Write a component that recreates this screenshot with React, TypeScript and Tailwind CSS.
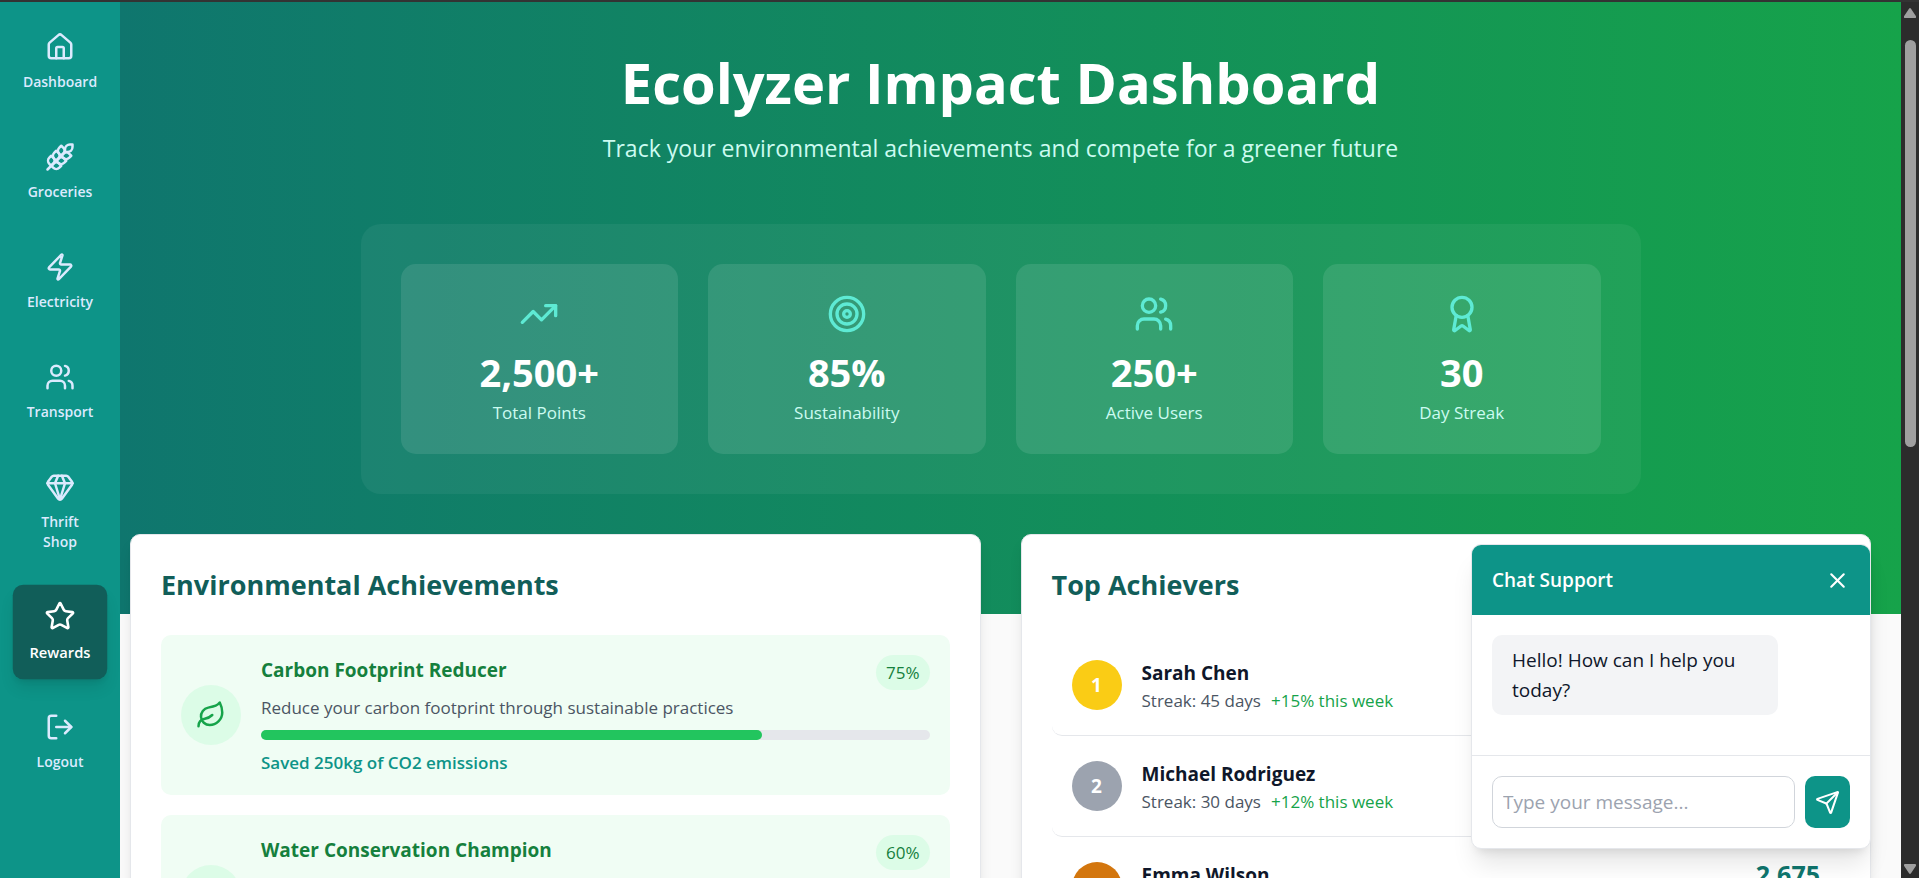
import { useState } from "react";
import {
  Award,
  Droplets,
  Gem,
  House,
  Leaf,
  LogOut,
  Send,
  Star,
  Target,
  TrendingUp,
  Users,
  Wheat,
  X,
  Zap,
  type LucideIcon,
} from "lucide-react";
import clsx from "clsx";

const navItems: { label: string; icon: LucideIcon; active?: boolean }[] = [
  { label: "Dashboard", icon: House },
  { label: "Groceries", icon: Wheat },
  { label: "Electricity", icon: Zap },
  { label: "Transport", icon: Users },
  { label: "Thrift Shop", icon: Gem },
  { label: "Rewards", icon: Star, active: true },
  { label: "Logout", icon: LogOut },
];

const stats: { value: string; label: string; icon: LucideIcon }[] = [
  { value: "2,500+", label: "Total Points", icon: TrendingUp },
  { value: "85%", label: "Sustainability", icon: Target },
  { value: "250+", label: "Active Users", icon: Users },
  { value: "30", label: "Day Streak", icon: Award },
];

const achievements = [
  {
    title: "Carbon Footprint Reducer",
    description: "Reduce your carbon footprint through sustainable practices",
    progress: 75,
    impact: "Saved 250kg of CO2 emissions",
    icon: Leaf,
  },
  {
    title: "Water Conservation Champion",
    description: "Implement water-saving techniques in daily life",
    progress: 60,
    impact: "Conserved 1000L of water",
    icon: Droplets,
  },
];

const achievers = [
  { name: "Sarah Chen", points: "2,850", streak: 45, change: "+15%", color: "bg-[#facc15]" },
  { name: "Michael Rodriguez", points: "2,720", streak: 30, change: "+12%", color: "bg-[#9ca3af]" },
  { name: "Emma Wilson", points: "2,675", streak: 28, change: "+10%", color: "bg-[#d3760e]" },
];

function Sidebar() {
  return (
    <nav className="w-[120px] shrink-0 bg-[#0d9488] pt-[15px] flex flex-col items-center gap-5">
      {navItems.map(({ label, icon: Icon, active }) => (
        <a
          key={label}
          href="#"
          className={clsx(
            "w-[90px] px-[10px] py-[15px] flex flex-col items-center gap-[10px] rounded-[10px] text-[14px] leading-5 font-semibold",
            active ? "bg-[#115e59] text-white shadow-lg scale-105" : "text-[#dbeafe]"
          )}
        >
          <Icon size={30} />
          <span className="text-center">{label}</span>
        </a>
      ))}
    </nav>
  );
}

function Hero() {
  return (
    <header className="bg-linear-to-r/srgb from-[#0f766e] to-[#16a34a] pt-[50px] pb-[120px] pl-[10px] pr-[30px] text-center">
      <h1 className="text-[56px] leading-[60px] font-bold text-white">Ecolyzer Impact Dashboard</h1>
      <p className="mt-[19px] text-[23px] leading-[35px] text-[#ccfbf1]">
        Track your environmental achievements and compete for a greener future
      </p>

      <div className="mt-[58px] mx-auto max-w-[1280px] rounded-[20px] bg-white/5 p-10 grid grid-cols-4 gap-[30px]">
        {stats.map(({ value, label, icon: Icon }) => (
          <div
            key={label}
            className="rounded-[15px] bg-white/10 px-[30px] pt-[30px] pb-[29px] flex flex-col items-center"
          >
            <Icon size={40} className="text-[#5eead4]" />
            <div className="mt-4 text-[38px] leading-[45px] font-bold text-white">{value}</div>
            <div className="mt-[5px] text-[17px] leading-[25px] text-[#ccfbf1]">{label}</div>
          </div>
        ))}
      </div>
    </header>
  );
}

function Card({ title, children }: { title: string; children: React.ReactNode }) {
  return (
    <section className="rounded-[10px] border border-[#e5e7eb] bg-white p-[30px] shadow-lg">
      <h2 className="mb-[30px] text-[27px] leading-10 font-bold text-[#115e59]">{title}</h2>
      {children}
    </section>
  );
}

function Achievements() {
  return (
    <div className="flex flex-col gap-5">
      {achievements.map(({ title, description, progress, impact, icon: Icon }) => (
        <div key={title} className="flex items-center gap-5 rounded-[10px] bg-[#f0fdf4] p-5">
          <div className="size-[60px] shrink-0 rounded-full bg-[#dcfce7] text-[#16a34a] flex items-center justify-center">
            <Icon size={30} />
          </div>
          <div className="flex-1">
            <div className="flex items-start justify-between">
              <h3 className="text-[19px] leading-[30px] font-bold text-[#15803d]">{title}</h3>
              <span className="rounded-full bg-[#dcfce7] px-[10px] py-[5px] text-[17px] leading-[25px] font-medium text-[#15803d]">
                {progress}%
              </span>
            </div>
            <p className="mt-[5px] text-[17px] leading-[25px] text-[#4b5563]">{description}</p>
            <div className="mt-[10px] h-[10px] rounded-full bg-[#e5e7eb]">
              <div className="h-full rounded-full bg-[#22c55e]" style={{ width: `${progress}%` }} />
            </div>
            <p className="mt-[10px] text-[17px] leading-[25px] font-semibold text-[#0d9488]">{impact}</p>
          </div>
        </div>
      ))}
    </div>
  );
}

function Leaderboard() {
  return (
    <ol>
      {achievers.map(({ name, points, streak, change, color }, i) => (
        <li key={name} className="flex items-center gap-5 rounded-[10px] border-b border-[#e5e7eb] p-5">
          <div
            className={clsx(
              "size-[50px] shrink-0 rounded-full text-[19px] font-bold text-white flex items-center justify-center",
              color
            )}
          >
            {i + 1}
          </div>
          <div className="flex-1">
            <h3 className="text-[19px] leading-[30px] font-bold text-[#0f172a]">{name}</h3>
            <p className="text-[17px] leading-[25px] text-[#4b5563]">
              Streak: {streak} days
              <span className="ml-[10px] text-[#16a34a]">{change} this week</span>
            </p>
          </div>
          <div className="text-right">
            <div className="text-[25px] leading-[35px] font-bold text-[#0f766e]">{points}</div>
            <div className="text-[17px] leading-[25px] text-[#6b7280]">points</div>
          </div>
        </li>
      ))}
    </ol>
  );
}

function ChatSupport() {
  const [open, setOpen] = useState(true);
  const [message, setMessage] = useState("");

  if (!open) return null;

  return (
    <aside className="absolute right-[30px] bottom-[29px] w-[400px] rounded-[10px] border border-[#e5e7eb] bg-white shadow-xl overflow-hidden">
      <div className="flex items-center justify-between bg-[#0d9488] p-5 text-white">
        <h3 className="text-[19px] leading-[30px] font-semibold">Chat Support</h3>
        <button type="button" aria-label="Close chat" onClick={() => setOpen(false)}>
          <X size={25} />
        </button>
      </div>
      <div className="px-5 pt-5 pb-10">
        <p className="w-4/5 rounded-[10px] bg-[#f3f4f6] px-5 py-[10px] text-[19px] leading-[30px] text-[#0f172a]">
          Hello! How can I help you today?
        </p>
      </div>
      <form
        className="flex gap-[10px] border-t border-[#e5e7eb] p-5"
        onSubmit={(e) => {
          e.preventDefault();
          setMessage("");
        }}
      >
        <input
          type="text"
          aria-label="Message"
          placeholder="Type your message..."
          value={message}
          onChange={(e) => setMessage(e.target.value)}
          className="min-w-0 flex-1 rounded-[10px] border border-[#d1d5db] p-[10px] text-[19px] leading-[30px] placeholder:text-[#9ca3af]"
        />
        <button
          type="submit"
          aria-label="Send message"
          className="w-[45px] rounded-[10px] bg-[#0d9488] text-white flex items-center justify-center"
        >
          <Send size={25} />
        </button>
      </form>
    </aside>
  );
}

function Scrollbar() {
  return (
    <div className="w-[18px] shrink-0 bg-[#2c2c2c] text-[#9f9f9f] flex flex-col items-center pt-[6px] pb-[4px]">
      <svg width="12" height="10" viewBox="0 0 12 10" fill="currentColor">
        <path d="M5 .8a1.2 1.2 0 0 1 2 0l5 7.4c.4.8 0 1.8-1 1.8H1C0 10-.4 9 0 8.200z" />
      </svg>
      <div className="mt-[22px] h-[407px] w-[11px] rounded-full bg-[#9f9f9f]" />
      <div className="flex-1" />
      <svg width="12" height="10" viewBox="0 0 12 10" fill="currentColor">
        <path d="M5 9.200a1.200 1.200 0 0 0 2 0l5-7.400c.4-.8 0-1.800-1-1.800H1C0 0-.4 1 0 1.800z" />
      </svg>
    </div>
  );
}

export default function App() {
  return (
    <div className="h-screen overflow-hidden border-t-2 border-[#333333] flex font-['Open_Sans',sans-serif]">
      <Sidebar />
      <div className="relative flex-1 overflow-hidden bg-[#fafafa]">
        <Hero />
        <main className="-mt-20 grid grid-cols-2 gap-10 pl-[10px] pr-[30px] pb-10">
          <Card title="Environmental Achievements">
            <Achievements />
          </Card>
          <Card title="Top Achievers">
            <Leaderboard />
          </Card>
        </main>
        <ChatSupport />
      </div>
      <Scrollbar />
    </div>
  );
}
